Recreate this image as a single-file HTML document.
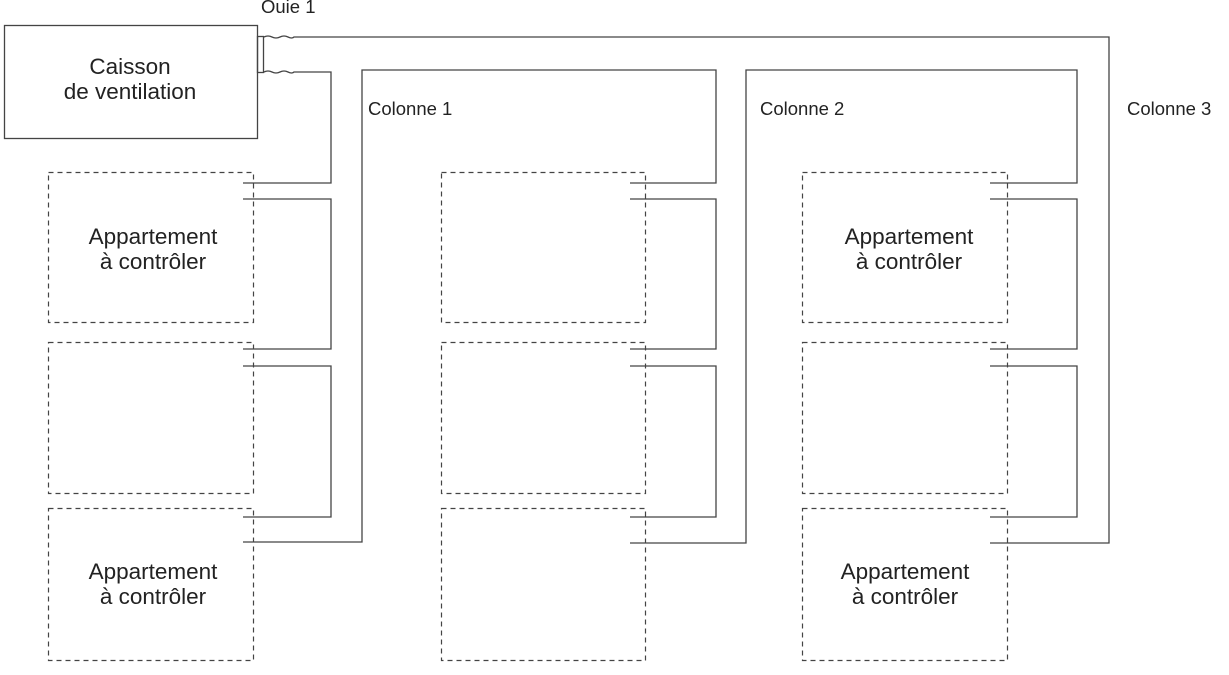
<!DOCTYPE html>
<html><head><meta charset="utf-8"><style>
html,body{margin:0;padding:0;background:#fff;}
svg{display:block;}
text{font-family:"Liberation Sans",sans-serif;fill:#222;}
</style></head><body>
<svg width="1229" height="675" viewBox="0 0 1229 675" xmlns="http://www.w3.org/2000/svg">
<g fill="none" stroke="#444" stroke-width="1.3">
<rect x="4.5" y="25.5" width="253" height="113"/>
<rect x="257.5" y="36.5" width="6" height="36"/>
<path d="M264 37 q4 -2 8 0 t8 0 t8 0 t6 0 L1109 37 L1109 543 L990 543"/>
<path d="M264 72 q4 -2 8 0 t8 0 t8 0 t6 0 L331 72 L331 183 L243 183"/>
<path d="M243 199 L331 199 L331 349 L243 349"/>
<path d="M243 366 L331 366 L331 517 L243 517"/>
<path d="M243 542 L362 542 L362 70 L716 70 L716 183 L630 183"/>
<path d="M630 199 L716 199 L716 349 L630 349"/>
<path d="M630 366 L716 366 L716 517 L630 517"/>
<path d="M630 543 L746 543 L746 70 L1077 70 L1077 183 L990 183"/>
<path d="M990 199 L1077 199 L1077 349 L990 349"/>
<path d="M990 366 L1077 366 L1077 517 L990 517"/>
</g>
<g fill="none" stroke="#444" stroke-width="1.2" stroke-dasharray="5,4">
<rect x="48.5" y="172.5" width="205" height="150"/>
<rect x="48.5" y="342.5" width="205" height="151"/>
<rect x="48.5" y="508.5" width="205" height="152"/>
<rect x="441.5" y="172.5" width="204" height="150"/>
<rect x="441.5" y="342.5" width="204" height="151"/>
<rect x="441.5" y="508.5" width="204" height="152"/>
<rect x="802.5" y="172.5" width="205" height="150"/>
<rect x="802.5" y="342.5" width="205" height="151"/>
<rect x="802.5" y="508.5" width="205" height="152"/>
</g>
<g font-size="22.5" text-anchor="middle">
<text x="130" y="74">Caisson</text>
<text x="130" y="99">de ventilation</text>
<text x="153" y="244">Appartement</text>
<text x="153" y="269">à contrôler</text>
<text x="153" y="579">Appartement</text>
<text x="153" y="604">à contrôler</text>
<text x="909" y="244">Appartement</text>
<text x="909" y="269">à contrôler</text>
<text x="905" y="579">Appartement</text>
<text x="905" y="604">à contrôler</text>
</g>
<g font-size="18.5">
<text x="261" y="13">Ouie 1</text>
<text x="368" y="115">Colonne 1</text>
<text x="760" y="115">Colonne 2</text>
<text x="1127" y="115">Colonne 3</text>
</g>
</svg>
</body></html>
